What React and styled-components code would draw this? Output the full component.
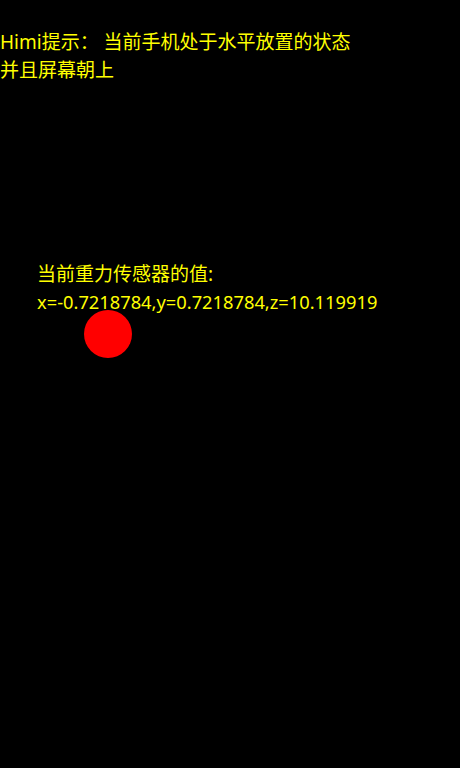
import React from 'react';
import styled, {createGlobalStyle} from 'styled-components';

const Global = createGlobalStyle`
html, body {
margin: 0;
padding: 0;
background: #000;
}
`

const Screen = styled.div`
position: relative;
width: 460px;
height: 768px;
background: #000;
overflow: hidden;
font-family: "Noto Sans", "Noto Sans CJK SC", sans-serif;
color: #ffff00;
`

const Tip = styled.div`
padding-top: 28px;
font-size: 19px;
line-height: 28px;
`

const Reading = styled.div`
margin-top: 176px;
padding-left: 37px;
font-size: 19px;
line-height: 28px;
`

const Values = styled.div`
font-size: 18.3px;
`

const Ball = styled.div`
position: absolute;
left: 84px;
top: 310px;
width: 48px;
height: 48px;
border-radius: 50%;
background: #ff0000;
`

const App = () => {
    const g = {x: -0.7218784, y: 0.7218784, z: 10.119919}
    return (
        <>
            <Global/>
            <Screen>
                <Tip>
                    <div>Himi提示： 当前手机处于水平放置的状态</div>
                    <div>并且屏幕朝上</div>
                </Tip>
                <Reading>
                    <div>当前重力传感器的值:</div>
                    <Values>x={g.x},y={g.y},z={g.z}</Values>
                </Reading>
                <Ball/>
            </Screen>
        </>
    )
}

export default App;
